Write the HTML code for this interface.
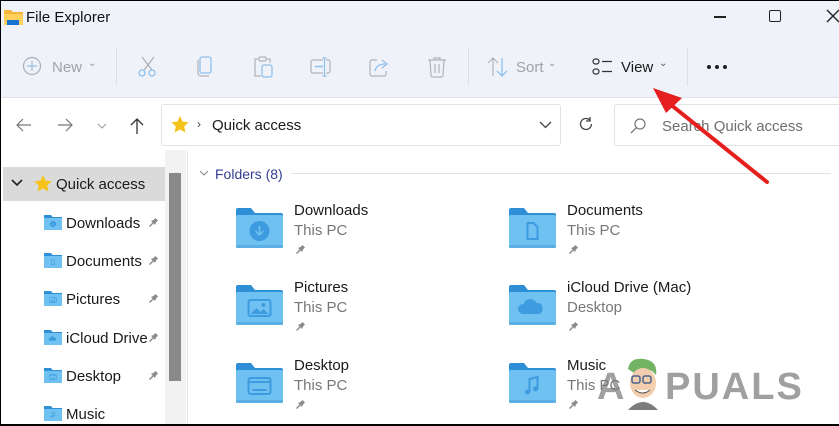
<!DOCTYPE html>
<html><head><meta charset="utf-8"><style>
*{margin:0;padding:0;box-sizing:border-box}
body{width:839px;height:426px;overflow:hidden;position:relative;background:#fff;font-family:"Liberation Sans",sans-serif;}
.a{position:absolute}
.t{position:absolute;white-space:nowrap}
</style></head><body>
<div class="a" style="left:0;top:0;width:839px;height:97px;background:#eff3f9"></div>
<div class="a" style="left:0;top:97px;width:839px;height:1px;background:#dfe3e8"></div>
<svg class="a" style="left:4px;top:8px" width="20" height="18"><path d="M0 2h7l2 2h10v12H0z" fill="#f4b73a"/><rect x="0" y="6" width="19" height="11" fill="#ffd15c"/><rect x="3" y="12" width="12" height="5" fill="#1673d2"/></svg>
<div class="t" style="left:26px;top:9px;font-size:15px;color:#111">File Explorer</div>
<div class="a" style="left:714px;top:16px;width:12px;height:1.5px;background:#222"></div>
<div class="a" style="left:769px;top:10px;width:12px;height:12px;border:1.5px solid #222;border-radius:2px"></div>
<svg class="a" style="left:826px;top:9px" width="14" height="14"><path d="M1 1L13 13M13 1L1 13" stroke="#222" stroke-width="1.4"/></svg>
<svg class="a" style="left:22px;top:56px" width="20" height="20"><circle cx="10" cy="10" r="8.5" fill="none" stroke="#a9aeb5" stroke-width="1.2"/><path d="M10 5v10M5 10h10" stroke="#9cbbdc" stroke-width="1.2"/></svg>
<div class="t" style="left:52px;top:59px;font-size:15px;color:#9ea3aa">New</div>
<div class="t" style="left:88px;top:58px;font-size:10px;color:#8f949a">&#8964;</div>
<div class="a" style="left:116px;top:48px;width:1px;height:38px;background:#dde1e6"></div>
<svg class="a" style="left:137px;top:56px" width="22" height="22"><path d="M5 1L15 14M17 1L7 14" stroke="#a9aeb5" stroke-width="1.2"/><circle cx="5" cy="17" r="3" fill="none" stroke="#8fc0ec" stroke-width="1.3"/><circle cx="15" cy="17" r="3" fill="none" stroke="#8fc0ec" stroke-width="1.3"/></svg>
<svg class="a" style="left:196px;top:56px" width="20" height="22"><rect x="4" y="1" width="11" height="16" rx="2" fill="none" stroke="#8fc0ec" stroke-width="1.3"/><path d="M2 4v13a3 3 0 0 0 3 3h8" fill="none" stroke="#b0b4ba" stroke-width="1.2"/></svg>
<svg class="a" style="left:253px;top:56px" width="22" height="22"><path d="M5 3H2v17h6M14 3h3v4" fill="none" stroke="#b0b4ba" stroke-width="1.2"/><rect x="6" y="1" width="7" height="4" rx="1" fill="none" stroke="#b0b4ba" stroke-width="1.2"/><rect x="9" y="9" width="10" height="12" rx="2" fill="none" stroke="#8fc0ec" stroke-width="1.3"/></svg>
<svg class="a" style="left:310px;top:57px" width="22" height="20"><rect x="1" y="3" width="19" height="13" rx="2" fill="none" stroke="#b0b4ba" stroke-width="1.2"/><path d="M5 9.5h8" stroke="#8fc0ec" stroke-width="1.6"/><rect x="13" y="2" width="3" height="16" fill="#eff3f9"/><path d="M14.5 1v18M12.5 1h4M12.5 19h4" stroke="#8fc0ec" stroke-width="1.2"/></svg>
<svg class="a" style="left:369px;top:57px" width="22" height="20"><path d="M8 3H3a2 2 0 0 0-2 2v12a2 2 0 0 0 2 2h12a2 2 0 0 0 2-2v-3" fill="none" stroke="#b0b4ba" stroke-width="1.2"/><path d="M6 14c1-5 5-7 10-7M13 3l5 4-5 4" fill="none" stroke="#8fc0ec" stroke-width="1.3"/></svg>
<svg class="a" style="left:427px;top:56px" width="20" height="22"><path d="M1 4h18M7 4V2h6v2M3 4l1 15a2 2 0 0 0 2 2h8a2 2 0 0 0 2-2l1-15M8 8v9M12 8v9" fill="none" stroke="#b0b4ba" stroke-width="1.2"/></svg>
<div class="a" style="left:468px;top:48px;width:1px;height:38px;background:#dde1e6"></div>
<svg class="a" style="left:487px;top:57px" width="22" height="20"><path d="M6 19V1M1 6l5-5 5 5" fill="none" stroke="#b0b4ba" stroke-width="1.2"/><path d="M15 1v18M10 14l5 5 5-5" fill="none" stroke="#8fc0ec" stroke-width="1.3"/></svg>
<div class="t" style="left:516px;top:59px;font-size:15px;color:#9ea3aa">Sort</div>
<div class="t" style="left:548px;top:58px;font-size:10px;color:#8f949a">&#8964;</div>
<svg class="a" style="left:592px;top:58px" width="22" height="18"><rect x="1" y="1" width="6" height="5" rx="2.5" fill="none" stroke="#333" stroke-width="1.2"/><rect x="1" y="11" width="6" height="5" rx="2.5" fill="none" stroke="#333" stroke-width="1.2"/><path d="M10 3.5h10M10 13.5h10" stroke="#333" stroke-width="1.2"/></svg>
<div class="t" style="left:621px;top:59px;font-size:15px;color:#1a1a1a">View</div>
<div class="t" style="left:659px;top:58px;font-size:10px;color:#555">&#8964;</div>
<div class="a" style="left:687px;top:48px;width:1px;height:38px;background:#dde1e6"></div>
<svg class="a" style="left:706px;top:64px" width="22" height="6"><circle cx="3" cy="3" r="2" fill="#222"/><circle cx="11" cy="3" r="2" fill="#222"/><circle cx="19" cy="3" r="2" fill="#222"/></svg>
<svg class="a" style="left:16px;top:118px" width="16" height="14"><path d="M15 7H2M7 1L1 7l6 6" fill="none" stroke="#777" stroke-width="1.2"/></svg>
<svg class="a" style="left:57px;top:118px" width="16" height="14"><path d="M1 7h13M9 1l6 6-6 6" fill="none" stroke="#777" stroke-width="1.2"/></svg>
<svg class="a" style="left:97px;top:123px" width="10" height="6"><path d="M1 1l4 4 4-4" fill="none" stroke="#999" stroke-width="1"/></svg>
<svg class="a" style="left:130px;top:117px" width="14" height="17"><path d="M7 17V2M1 8l6-6 6 6" fill="none" stroke="#333" stroke-width="1.3"/></svg>
<div class="a" style="left:161px;top:104px;width:400px;height:42px;border:1px solid #e3e3e3;border-radius:3px"></div>
<svg class="a" style="left:171px;top:116px" width="18" height="17"><path d="M9 0l2.6 5.6 6.1.7-4.5 4.2 1.2 6L9 13.5 3.6 16.5l1.2-6L.3 6.3l6.1-.7z" fill="#f6c21c"/></svg>
<div class="t" style="left:197px;top:117px;font-size:12px;color:#444">›</div>
<div class="t" style="left:212px;top:117px;font-size:15px;color:#1a1a1a">Quick access</div>
<svg class="a" style="left:539px;top:121px" width="13" height="8"><path d="M1 1l5.5 5.5L12 1" fill="none" stroke="#444" stroke-width="1.3"/></svg>
<svg class="a" style="left:578px;top:116px" width="16" height="16"><path d="M13.5 8A5.5 5.5 0 1 1 11.8 4M12 1v4H8" fill="none" stroke="#444" stroke-width="1.3"/></svg>
<div class="a" style="left:614px;top:104px;width:230px;height:42px;border:1px solid #e3e3e3;border-radius:3px"></div>
<svg class="a" style="left:630px;top:118px" width="16" height="16"><circle cx="10" cy="6" r="5" fill="none" stroke="#777" stroke-width="1.2"/><path d="M6.5 9.5L1 15" stroke="#777" stroke-width="1.3"/></svg>
<div class="t" style="left:662px;top:118px;font-size:15px;color:#6e6e6e">Search Quick access</div>
<div class="a" style="left:0;top:150px;width:839px;height:276px;background:#fff"></div>
<div class="a" style="left:3px;top:167px;width:162px;height:34px;background:#dadada"></div>
<svg class="a" style="left:11px;top:179px" width="12" height="8"><path d="M1 1l5 5 5-5" fill="none" stroke="#222" stroke-width="1.6"/></svg>
<svg class="a" style="left:34px;top:175px" width="18" height="17"><path d="M9 0l2.6 5.6 6.1.7-4.5 4.2 1.2 6L9 13.5 3.6 16.5l1.2-6L.3 6.3l6.1-.7z" fill="#f6c21c"/></svg>
<div class="t" style="left:56px;top:176px;font-size:15px;color:#1a1a1a">Quick access</div>
<div class="a" style="left:165px;top:150px;width:21px;height:276px;background:#f2f2f2"></div>
<div class="a" style="left:169px;top:173px;width:12px;height:208px;background:#898989"></div>
<div class="a" style="left:187px;top:150px;width:1px;height:276px;background:#e6e6e6"></div>
<div class="a" style="left:0;top:0;width:1px;height:426px;background:#000"></div>
<div class="a" style="left:0;top:0;width:839px;height:1px;background:#000"></div>
<div class="a" style="left:0;top:424px;width:839px;height:2px;background:#000"></div>
<svg class="a" style="left:199px;top:170px" width="10" height="6"><path d="M1 1l4 4 4-4" fill="none" stroke="#888" stroke-width="1"/></svg>
<div class="t" style="left:215px;top:166px;font-size:14px;color:#33408f">Folders (8)</div>
<div class="a" style="left:291px;top:173px;width:540px;height:1px;background:#e3e3e3"></div>
<div id="side"></div>
<div id="grid"></div>
<svg class="a" style="left:640px;top:80px" width="140" height="110"><path d="M127 102L25 20" stroke="#e51e1e" stroke-width="4" stroke-linecap="round"/><path d="M13 8L42 18L26 33Z" fill="#e51e1e"/></svg>
<div class="t" style="left:597px;top:366px;font-size:38px;font-weight:bold;color:rgba(120,120,120,.7);letter-spacing:1px">A</div>
<svg class="a" style="left:622px;top:355px" width="42" height="55" opacity=".85"><path d="M6 14Q8 2 22 4Q36 6 34 20L30 16Q20 12 12 18Z" fill="#5aa84a"/><ellipse cx="21" cy="28" rx="13" ry="15" fill="#f2c6a0"/><rect x="10" y="21" width="8" height="7" rx="2" fill="none" stroke="#2a4a7a" stroke-width="1.5"/><rect x="21" y="21" width="8" height="7" rx="2" fill="none" stroke="#2a4a7a" stroke-width="1.5"/><path d="M13 35q8 6 15 0" fill="#fff" stroke="#333"/><path d="M6 55q15-16 30 0" fill="#666"/></svg>
<div class="t" style="left:665px;top:366px;font-size:38px;font-weight:bold;color:rgba(120,120,120,.7);letter-spacing:2px">PUALS</div>
<script>
var pin=function(x,y,c){return '<svg class="a" style="left:'+x+'px;top:'+y+'px" width="12" height="12"><path d="M1.5 10.5l3.5-3.5" stroke="'+c+'" stroke-width="1.4"/><path d="M3 5l4 4 1-2.5 2-2-2.5-2.5-2 2z" fill="'+c+'"/></svg>';};
var glyph=function(i,x,y,sc){var c='#3d9be0',s='<g transform="translate('+x+','+y+') scale('+sc+')">';
if(i==0)s+='<circle cx="0" cy="0" r="10" fill="'+c+'"/><path d="M0-5v9M-4 0l4 4 4-4" stroke="#6ec1f0" stroke-width="1.5" fill="none"/>';
if(i==1)s+='<path d="M-5-8h6l4 4v12h-10z" fill="none" stroke="'+c+'" stroke-width="2"/>';
if(i==2)s+='<rect x="-11" y="-8" width="22" height="16" rx="2" fill="none" stroke="'+c+'" stroke-width="2"/><path d="M-9 6l6-6 4 4 3-3 5 5z" fill="'+c+'"/><circle cx="4" cy="-3" r="2" fill="'+c+'"/>';
if(i==3)s+='<path d="M-10 6a5 5 0 0 1 1-10a7 7 0 0 1 13-1a5 5 0 0 1 6 6a5 5 0 0 1-3 5z" fill="'+c+'"/>';
if(i==4)s+='<rect x="-11" y="-8" width="22" height="16" rx="2" fill="none" stroke="'+c+'" stroke-width="2"/><path d="M-11-4h22M-7 4h14" stroke="'+c+'" stroke-width="2"/>';
if(i==5)s+='<path d="M-3 6V-7l8-2v12" fill="none" stroke="'+c+'" stroke-width="2"/><circle cx="-5" cy="6" r="2.5" fill="'+c+'"/><circle cx="3" cy="3" r="2.5" fill="'+c+'"/>';
return s+'</g>';};
var s='',items=['Downloads','Documents','Pictures','iCloud Drive','Desktop','Music'];
items.forEach(function(n,i){var y=223+i*38.2;
s+='<svg class="a" style="left:44px;top:'+(y-9)+'px" width="18" height="16"><path d="M0 1h7l1.5 2H18v13H0z" fill="#2f8fd6"/><rect x="0" y="4" width="18" height="12" fill="#6ec1f0"/>'+glyph(i,9,10,0.3)+'</svg>';
s+='<div class="t" style="left:66px;top:'+(y-8)+'px;font-size:15px;color:#1a1a1a">'+n+'</div>';
if(i<5)s+=pin(148,y-7,'#8a8a8a');});
document.getElementById('side').innerHTML=s;
var g='',data=[['Downloads','This PC',236,294,210,0],['Documents','This PC',509,567,210,1],['Pictures','This PC',236,294,287,2],['iCloud Drive (Mac)','Desktop',509,567,287,3],['Desktop','This PC',236,294,365,4],['Music','This PC',509,567,365,5]];
data.forEach(function(d){var x=d[2],y=d[4];
g+='<svg class="a" style="left:'+x+'px;top:'+(y-3)+'px" width="47" height="42"><path d="M0 3a2 2 0 0 1 2-2h13l4 5h26a2 2 0 0 1 2 2v30H0z" fill="#2f8fd6"/><rect x="0" y="8" width="47" height="33" rx="2" fill="#6ec1f0"/><rect x="0" y="38" width="47" height="3" rx="1" fill="#5ab0e4"/>'+glyph(d[5],23.5,24,1)+'</svg>';
g+='<div class="t" style="left:'+d[3]+'px;top:'+(y-8)+'px;font-size:15px;color:#1a1a1a">'+d[0]+'</div>';
g+='<div class="t" style="left:'+d[3]+'px;top:'+(y+12)+'px;font-size:15px;color:#777">'+d[1]+'</div>';
g+=pin(d[3]+1,y+33,'#8a8a8a');});
document.getElementById('grid').innerHTML=g;
</script>
</body></html>
